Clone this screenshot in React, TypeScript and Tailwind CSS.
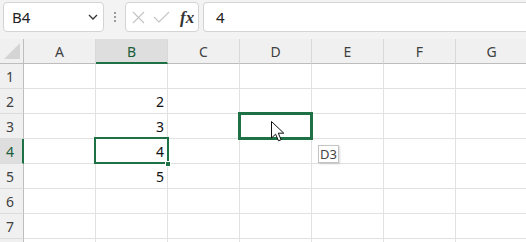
const cols = ["A", "B", "C", "D", "E", "F", "G"];
const rows = [1, 2, 3, 4, 5, 6, 7, 8];
const values: Record<string, string> = { B2: "2", B3: "3", B4: "4", B5: "5" };

function Cursor() {
  return (
    <svg width="15" height="22" viewBox="0 0 15 22" className="absolute left-[271px] top-[121px]">
      <path
        d="M0.5 0.5 L0.5 17 L4.6 13.2 L7.5 19.8 L10.1 18.7 L7.3 12.2 L12.8 12.2 Z"
        fill="#fff"
        stroke="#111"
        strokeWidth="1"
        strokeLinejoin="miter"
      />
    </svg>
  );
}

export default function App() {
  return (
    <div className="relative h-[242px] w-[526px] overflow-hidden bg-[#f3f3f3] font-['Noto_Sans','Noto_Sans_CJK_JP',sans-serif] text-[#222]">
      {/* formula bar */}
      <div className="flex h-[39px] items-start pt-[2px]">
        <div className="ml-[3px] flex h-[30px] w-[101px] items-center justify-between rounded-[4px] border border-[#d4d4d4] bg-white pl-[8px] pr-[5px]">
          <span className="text-[15px] leading-none">B4</span>
          <svg width="10" height="6" viewBox="0 0 10 6">
            <path d="M1 1 L5 5 L9 1" fill="none" stroke="#333" strokeWidth="1.3" />
          </svg>
        </div>
        <div className="flex h-[30px] w-[21px] flex-col items-center justify-center gap-[2px]">
          <span className="h-[2px] w-[2px] bg-[#9a9a9a]" />
          <span className="h-[2px] w-[2px] bg-[#9a9a9a]" />
          <span className="h-[2px] w-[2px] bg-[#9a9a9a]" />
        </div>
        <div className="flex h-[30px] w-[74px] items-center rounded-[4px] border border-[#d4d4d4] bg-white pl-[6px]">
          <svg width="13" height="13" viewBox="0 0 13 13">
            <path d="M1 1 L12 12 M12 1 L1 12" stroke="#c4c4c4" strokeWidth="1.1" />
          </svg>
          <svg width="17" height="12" viewBox="0 0 17 12" className="ml-[8px]">
            <path d="M1 6 L6 11 L16 1" fill="none" stroke="#c4c4c4" strokeWidth="1.1" />
          </svg>
          <span className="ml-[10px] font-['Liberation_Serif',serif] text-[17px] font-bold italic leading-none text-[#333]">fx</span>
        </div>
        <div className="ml-[4px] flex h-[30px] flex-1 items-center rounded-l-[4px] border border-r-0 border-[#d4d4d4] bg-white pl-[12px]">
          <span className="text-[15px] leading-none">4</span>
        </div>
      </div>

      {/* sheet */}
      <div className="grid grid-cols-[24px_repeat(7,72px)] grid-rows-[25px_repeat(8,25px)]">
        <div className="flex items-end justify-end border-b border-r border-[#bdbdbd] bg-[#f0f0f0] pb-[4px] pr-[3px]">
          <div className="h-0 w-0 border-b-[16px] border-l-[16px] border-b-[#d4d4d4] border-l-transparent" />
        </div>
        {cols.map((c) => (
          <div
            key={c}
            className={
              c === "B"
                ? "flex items-center justify-center border-b-2 border-r border-b-[#1e7145] border-r-[#d8d8d8] bg-[#dedede] pt-[2px] text-[14px] text-[#1a5c3a]"
                : "flex items-center justify-center border-b border-r border-b-[#bdbdbd] border-r-[#d8d8d8] bg-[#f0f0f0] pt-[1px] text-[14px] text-[#404040]"
            }
          >
            {c}
          </div>
        ))}
        {rows.map((r) => (
          <div key={r} className="contents">
            <div
              className={
                r === 4
                  ? "flex items-center border-b border-r-2 border-b-[#dcdcdc] border-r-[#1e7145] bg-[#dedede] pl-[6px] text-[14px] text-[#1a5c3a]"
                  : "flex items-center border-b border-r border-b-[#dcdcdc] border-r-[#bdbdbd] bg-[#f0f0f0] pl-[6px] text-[14px] text-[#404040]"
              }
            >
              {r < 8 ? r : ""}
            </div>
            {cols.map((c) => (
              <div
                key={c + r}
                className="flex items-center justify-end border-b border-r border-[#e1e1e1] bg-white pr-[3px] text-[14px] text-[#111]"
              >
                {values[c + r]}
              </div>
            ))}
          </div>
        ))}
      </div>

      {/* active cell B4 */}
      <div className="absolute left-[94px] top-[137px] h-[27px] w-[75px] border-2 border-[#1e7145]" />
      <div className="absolute left-[165px] top-[161px] h-[6px] w-[6px] border border-white bg-[#1e7145]" />

      {/* drag target D3 */}
      <div className="absolute left-[238px] top-[112px] h-[28px] w-[75px] border-[3px] border-[#1e7145]" />
      <Cursor />

      {/* tooltip */}
      <div className="absolute left-[318px] top-[145px] flex h-[18px] w-[21px] items-center justify-center border border-[#c4c4c4] bg-white text-[13px] leading-none text-[#444] shadow-[1px_1px_2px_rgba(0,0,0,0.15)]">
        D3
      </div>
    </div>
  );
}
